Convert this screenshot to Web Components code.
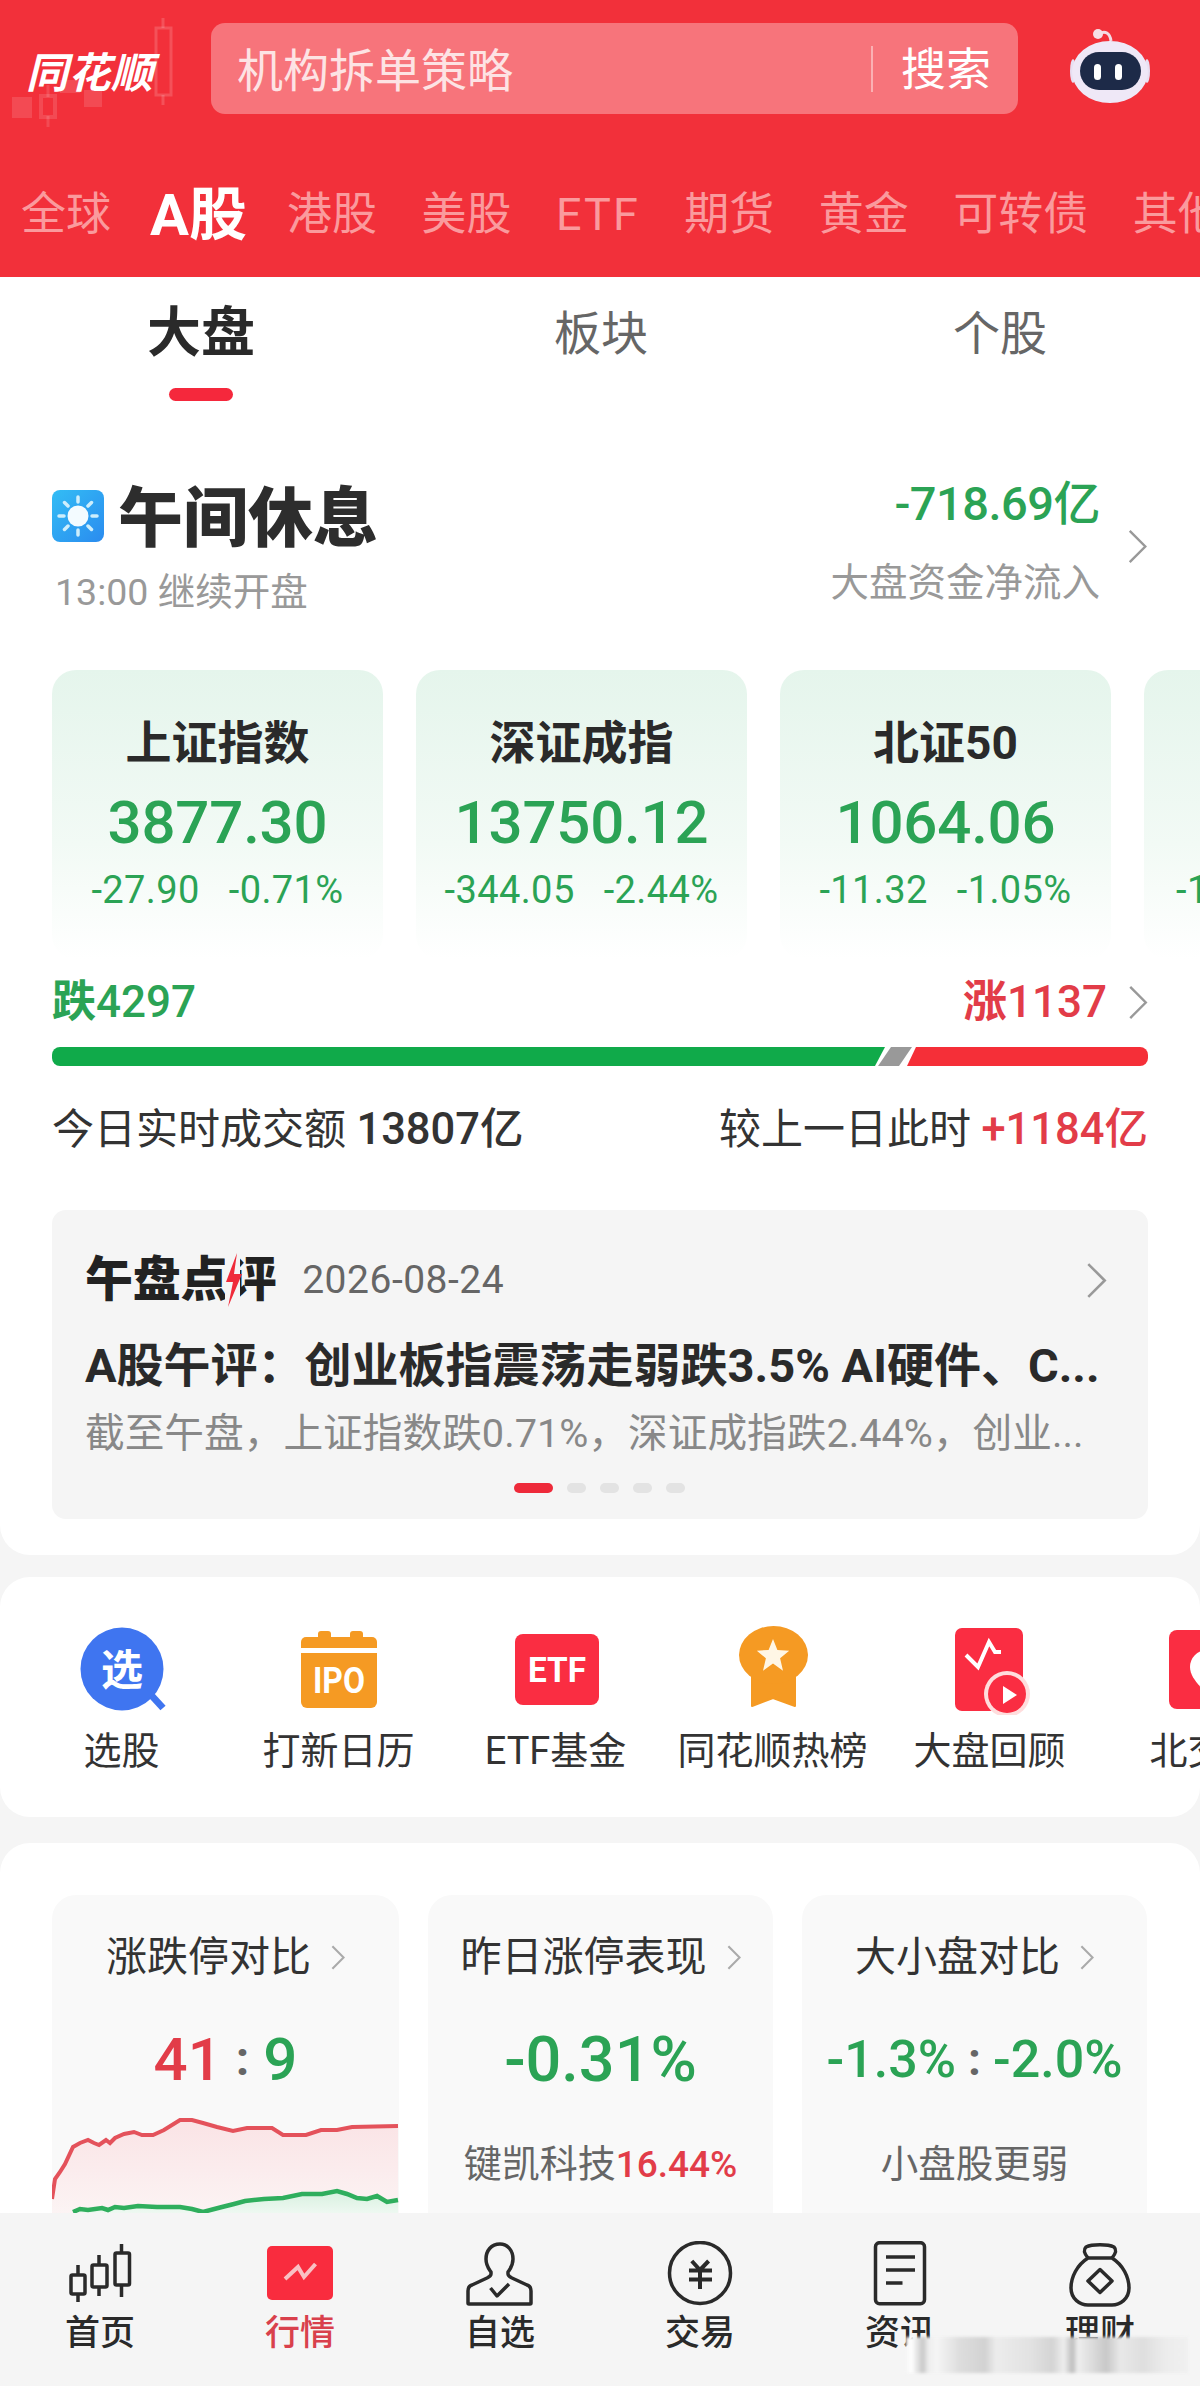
<!DOCTYPE html>
<html lang="zh-CN"><head><meta charset="utf-8"><title>同花顺行情</title>
<style>html,body{margin:0;padding:0;background:#f5f5f5}body{width:1200px;font-family:Roboto,"Noto Sans CJK SC",sans-serif;color:#333}</style></head>
<body>
<app-shell>
  <app-header></app-header>
  <scroll-area>
    <overview-section></overview-section>
    <shortcut-section>
      <shortcut-item label="选股" icon="pick"></shortcut-item>
      <shortcut-item label="打新日历" icon="ipo"></shortcut-item>
      <shortcut-item label="ETF基金" icon="etf"></shortcut-item>
      <shortcut-item label="同花顺热榜" icon="medal"></shortcut-item>
      <shortcut-item label="大盘回顾" icon="review"></shortcut-item>
      <shortcut-item label="北交所" icon="pin"></shortcut-item>
    </shortcut-section>
    <compare-section></compare-section>
  </scroll-area>
  <bottom-nav></bottom-nav>
</app-shell>
<script>
const GREEN='#2ba355',RED='#e23c48';
const CHEV=(w,h,c,sw)=>`<svg width="${w}" height="${h}" viewBox="0 0 20 36" style="display:block;flex:none" fill="none" stroke="${c}" stroke-width="${sw}"><path d="M2 2 L18 18 L2 34"/></svg>`;
function def(name,render){customElements.define(name,class extends HTMLElement{connectedCallback(){if(this.shadowRoot)return;const r=this.attachShadow({mode:'open'});r.innerHTML=render(this)}})}

def('app-shell',()=>`<style>:host{display:flex;flex-direction:column;width:1200px;height:2386px;overflow:hidden;background:#f5f5f5}</style><slot></slot>`);
def('scroll-area',()=>`<style>:host{display:block;height:1936px;overflow:hidden;flex:none}</style><slot></slot>`);

def('app-header',()=>{
const tabs=['全球','A股','港股','美股','ETF','期货','黄金','可转债','其他'];
return `<style>
:host{display:block;height:277px;background:#f2303a;overflow:hidden;flex:none}
.top{display:flex;padding-top:23px;height:91px}
.logo{position:relative;width:211px;flex:none}
.logo svg{position:absolute;left:0;top:-23px}
.logo b{position:absolute;left:26px;top:22px;font:italic 700 42px/50px "Noto Sans CJK SC",sans-serif;color:#fff;letter-spacing:.5px;white-space:nowrap}
.search{width:807px;height:91px;box-sizing:border-box;background:#f7747b;border-radius:14px;display:flex;align-items:center;padding:4px 0 0 26px;flex:none;color:#fde3e4;font-size:46px;line-height:60px}
.search span{flex:1}
.search i{width:2px;height:46px;background:#fbb0b3;margin:-4px 28px 0 0}
.search em{font-style:normal;color:#fff;padding-right:27px;font-size:45px}
.robot{margin-left:52px;margin-top:-2px;flex:none}
.tabs{display:flex;align-items:center;gap:44.5px;padding-left:21px;margin-top:71px;height:60px;white-space:nowrap;font-size:45px;line-height:60px;color:#fa9a9d}
.tabs .on{color:#fff;font-weight:700;font-size:58px;margin:0 -4.5px 0 -5.5px}
.tabs .e{letter-spacing:2px}
</style>
<div class="top"><div class="logo">
<svg width="190" height="130" fill="#ffffff" fill-opacity=".13"><rect x="12" y="97" width="20" height="21"/><path d="M48 85v12M48 116v11" stroke="#fff" stroke-opacity=".13" stroke-width="3"/><rect x="41" y="96" width="14" height="21" fill="none" stroke="#fff" stroke-opacity=".13" stroke-width="4"/><rect x="60" y="80" width="20" height="13"/><rect x="84" y="90" width="18" height="17"/><path d="M163 18v10M163 95v10" stroke="#fff" stroke-opacity=".16" stroke-width="3"/><rect x="156" y="28" width="15" height="67" fill="none" stroke="#fff" stroke-opacity=".16" stroke-width="3"/></svg>
<b>同花顺</b></div>
<div class="search"><span>机构拆单策略</span><i></i><em>搜索</em></div>
<svg class="robot" width="100" height="100" viewBox="0 0 100 100"><path d="M29 13 C35 9 40 12 41 20" fill="none" stroke="#f3dbe4" stroke-width="3"/><circle cx="28" cy="13" r="5" fill="#f6dfe6"/><ellipse cx="3" cy="50" rx="3" ry="12" fill="#e8dff2"/><ellipse cx="77" cy="50" rx="3" ry="12" fill="#e8dff2"/><ellipse cx="40" cy="51" rx="38" ry="31" fill="#efe8f7"/><rect x="10" y="31" width="61" height="38" rx="19" fill="#1d2a48"/><rect x="24" y="43" width="7" height="16" rx="3.5" fill="#fff"/><rect x="45" y="43" width="7" height="16" rx="3.5" fill="#fff"/></svg>
</div>
<div class="tabs">${tabs.map(t=>`<span class="${t==='A股'?'on':t==='ETF'?'e':''}">${t}</span>`).join('')}</div>`});

def('index-card',h=>{const g=k=>h.getAttribute(k)||'';
return `<style>
:host{display:block;width:331px;height:289px;flex:none;box-sizing:border-box;padding-top:48px;border-radius:24px;background:linear-gradient(#e5f5ec,#f2faf5 60%,#fff);text-align:center}
.t{height:50px;font-size:46px;line-height:50px;font-weight:700;color:#2a2a2a}
.v{height:70px;margin-top:20px;font-size:60px;line-height:70px;font-weight:500;color:${GREEN};letter-spacing:-.2px}
.s{height:46px;margin-top:9px;display:flex;justify-content:center;gap:29px;font-size:38px;line-height:46px;color:${GREEN};white-space:nowrap;letter-spacing:.4px}
:host([clipped]) .s{justify-content:flex-start;padding-left:32px}
</style><div class="t">${g('name')}</div><div class="v">${g('value')}</div><div class="s"><span>${g('a')}</span><span>${g('b')}</span></div>`});

def('overview-section',()=>`<style>
:host{display:block;background:#fff;border-radius:0 0 30px 30px;height:1278px;overflow:hidden;box-sizing:border-box}
.sub{display:grid;grid-template-columns:402px 398px 400px;padding-top:27px;height:125px;box-sizing:border-box;text-align:center;font-size:47px;line-height:60px;color:#666}
.sub b{display:block;font-size:54px;color:#2a2a2a;font-weight:700}
.sub u{display:block;width:64px;height:13px;border-radius:7px;background:#f5283c;margin:24px auto 0}
.sum{display:flex;padding:83px 52px 0;height:268px;box-sizing:border-box;justify-content:space-between;align-items:flex-start}
.ttl{display:flex;align-items:center;gap:14px;height:64px;margin-top:2px;font-size:65px;line-height:64px;font-weight:900;color:#2d2d2d}
.ttl svg{display:block;margin-top:-7px}
.when{margin:16px 0 0 3px;font-size:37.5px;line-height:50px;color:#999;white-space:nowrap}
.flow{display:flex;gap:27px;align-items:center;margin-top:-6px}
.flow div{text-align:right}
.flow b{display:block;font-weight:500;font-size:47px;line-height:50px;color:${GREEN};letter-spacing:-.5px}
.flow span{display:block;margin-top:29px;font-size:38.5px;line-height:50px;color:#999}
.flow svg{margin-top:6px}
.cards{display:flex;gap:33px;margin-left:52px;width:1400px}
.rows{padding:0 52px}
.rf{display:flex;justify-content:space-between;align-items:center;margin-top:18px;height:50px;font-size:44px;line-height:50px;font-weight:500}
.rf .r{display:flex;align-items:center;gap:21px;color:${RED}}
.rf .l{color:${GREEN}}
.bar{display:block;margin-top:20px;height:19px;border-radius:8px;overflow:hidden}
.bar svg{display:block}
.turn{display:flex;justify-content:space-between;margin-top:39px;height:50px;font-size:42px;line-height:50px;color:#333;white-space:nowrap}
.turn b{font-weight:500;font-size:43.5px}.turn .p{color:${RED}}
.news{position:relative;margin-top:55px;height:309px;box-sizing:border-box;padding:45px 41px 0 33px;background:#f5f5f5;border-radius:14px}
.hd{display:flex;align-items:center;height:50px;position:relative}
.hd strong{position:relative;font-size:48px;line-height:50px;font-weight:900;color:#222;letter-spacing:-.2px;white-space:nowrap}
.hd strong svg{position:absolute;left:140px;top:-2px}
.hd time{margin-left:26px;font-size:39px;color:#666;line-height:50px;flex:1;letter-spacing:.5px}
.h{margin-top:31px;height:60px;font-size:47px;line-height:60px;font-weight:700;color:#2a2a2a;white-space:nowrap}
.d{margin-top:13px;height:50px;font-size:39.7px;line-height:50px;color:#888;white-space:nowrap}
.dots{display:flex;gap:14px;margin:24px 0 0 429px}
.dots i{width:19px;height:10px;border-radius:5px;background:#e3e3e3}
.dots i:first-child{width:39px;background:#ee2a3a}
</style>
<div class="sub"><div><b>大盘</b><u></u></div><div>板块</div><div>个股</div></div>
<div class="sum"><div>
<div class="ttl"><svg width="52" height="52" viewBox="0 0 52 52"><defs><linearGradient id="s" x2="1" y2="1"><stop stop-color="#33bdf5"/><stop offset="1" stop-color="#2a8bef"/></linearGradient></defs><rect width="52" height="52" rx="8" fill="url(#s)"/><circle cx="26" cy="26" r="10.5" fill="#f3fbff"/><g stroke="#cdeefc" stroke-width="3.5" stroke-linecap="round"><path d="M26 7v5M26 40v5M7 26h5M40 26h5M12.5 12.5l3.5 3.5M36 36l3.5 3.5M12.5 39.5l3.5-3.5M36 16l3.5-3.5"/></g></svg><span>午间休息</span></div>
<div class="when">13:00 继续开盘</div></div>
<div class="flow"><div><b>-718.69亿</b><span>大盘资金净流入</span></div>${CHEV(21,35,'#999',2.5)}</div></div>
<div class="cards">
<index-card name="上证指数" value="3877.30" a="-27.90" b="-0.71%"></index-card>
<index-card name="深证成指" value="13750.12" a="-344.05" b="-2.44%"></index-card>
<index-card name="北证50" value="1064.06" a="-11.32" b="-1.05%"></index-card>
<index-card a="-1" clipped></index-card></div>
<div class="rows">
<div class="rf"><span class="l"><b>跌</b>4297</span><span class="r"><span><b>涨</b>1137</span>${CHEV(20,35,'#999',2.5)}</span></div>
<div class="bar"><svg width="1096" height="19"><polygon points="0,0 833,0 823,19 0,19" fill="#10aa4a"/><polygon points="839,0 860,0 847,19 826,19" fill="#999"/><polygon points="864,0 1096,0 1096,19 855,19" fill="#f52f38"/></svg></div>
<div class="turn"><span>今日实时成交额 <b>13807亿</b></span><span>较上一日此时 <b class="p">+1184亿</b></span></div>
<div class="news"><div class="hd"><strong>午盘点评<svg width="20" height="54" viewBox="0 0 20 54"><rect width="15" height="54" fill="#f5f5f5"/><polygon points="12,0 1,29 8,29 3,54 17,21 9,21" fill="#ef2b3a"/></svg></strong><time>2026-08-24</time>${CHEV(21,37,'#999',2.5)}</div>
<div class="h">A股午评：创业板指震荡走弱跌3.5% AI硬件、C...</div>
<div class="d">截至午盘，上证指数跌0.71%，深证成指跌2.44%，创业...</div>
<div class="dots"><i></i><i></i><i></i><i></i><i></i></div></div></div>`);

def('shortcut-section',()=>`<style>:host{display:flex;margin-top:22px;height:240px;box-sizing:border-box;padding:46px 0 0 13px;background:#fff;border-radius:30px;overflow:hidden;width:1200px}</style><slot></slot>`);
const IC={
pick:`<circle cx="50" cy="44" r="41.5" fill="#3f75f0"/><path d="M80 71 L91 83" stroke="#3f75f0" stroke-width="7"/><text x="50" y="60" text-anchor="middle" font-size="42" font-weight="700" fill="#fff" font-family="Noto Sans CJK SC">选</text>`,
ipo:`<g fill="#f59a23"><rect x="29" y="6" width="13" height="10" rx="3"/><rect x="61" y="6" width="13" height="10" rx="3"/><path d="M12 23v-6a5 5 0 0 1 5-5h66a5 5 0 0 1 5 5v6z"/><path d="M12 28h76v49a6 6 0 0 1-6 6H18a6 6 0 0 1-6-6z"/></g><text x="50" y="68" text-anchor="middle" font-size="36" font-weight="700" fill="#fff" textLength="52" lengthAdjust="spacingAndGlyphs" font-family="Roboto">IPO</text>`,
etf:`<rect x="9" y="9" width="84" height="71" rx="8" fill="#fa2d42"/><text x="51" y="57" text-anchor="middle" font-size="35" font-weight="700" fill="#fff" textLength="58" lengthAdjust="spacingAndGlyphs" font-family="Roboto">ETF</text>`,
medal:`<polygon points="29,44 29,81 50,73 72,81 72,44" fill="#f59a23" stroke="#f59a23" stroke-width="2" stroke-linejoin="round"/><ellipse cx="50.5" cy="30" rx="34.5" ry="29" fill="#f59a23"/><polygon points="50,14 54.4,24.9 66.2,25.7 57.1,33.3 60,45.8 50,38.5 40,45.8 42.9,33.3 33.8,25.7 45.6,24.9" fill="#fff6e5"/>`,
review:`<rect x="15" y="3" width="68" height="83" rx="7" fill="#fa2d42"/><path d="M26 30 L38 42 L49 17 L55 27 L61 27" fill="none" stroke="#fff" stroke-width="4"/><circle cx="67" cy="69" r="23" fill="#fdd" /><circle cx="67" cy="69" r="19" fill="#fa2d42"/><polygon points="63,61 77,70 63,79" fill="#fff"/>`,
pin:`<rect x="12" y="5" width="80" height="79" rx="8" fill="#fa2d42"/><path d="M50 25 a17 17 0 0 1 17 17 c0 10 -10 20 -17 26 c-7 -6 -17 -16 -17 -26 a17 17 0 0 1 17 -17z" fill="#fff"/>`};
def('shortcut-item',h=>`<style>:host{display:block;width:217px;flex:none;text-align:center}svg{display:block;margin:2px auto 0}
div{margin-top:11px;font-size:38px;line-height:50px;color:#333;white-space:nowrap}</style>
<svg width="100" height="90" viewBox="0 0 100 90">${IC[h.getAttribute('icon')]}</svg><div>${h.getAttribute('label')}</div>`);

def('compare-section',()=>`<style>
:host{display:block;margin-top:26px;background:#fff;border-radius:30px;padding:52px 52px 0;height:500px;box-sizing:border-box}
.g{display:grid;grid-template-columns:347px 345px 345px;gap:29px}
.c{position:relative;height:450px;background:#f9f9f9;border-radius:24px 24px 0 0;padding-top:37px;box-sizing:border-box;text-align:center;overflow:hidden}
.t{display:flex;justify-content:center;align-items:center;gap:20px;height:50px;font-size:41px;line-height:50px;color:#333;white-space:nowrap}
.v{height:80px;margin-top:38px;font-size:63px;line-height:80px;font-weight:500;white-space:nowrap;color:${GREEN}}
.v.a{font-size:60px}
.v i{font-style:normal;font-weight:700;color:#666;font-size:48px;margin:0 14px;position:relative;top:-5px}
.v.s{font-size:52px}.v.s i{margin:0 12px;top:-2px;font-size:46px}
.n{height:50px;margin-top:39px;font-size:38px;line-height:50px;color:#666;white-space:nowrap}
.n b{color:${RED};font-weight:500;font-size:37px}
svg.ch{display:block;margin-top:10px}
</style>
<div class="g">
<div class="c"><div class="t"><span>涨跌停对比</span>${CHEV(14,27,'#aaa',3)}</div><div class="v a"><span style="color:${RED}">41</span><i>:</i><span>9</span></div>
<svg class="ch" width="347" height="110" viewBox="0 0 347 110"><defs><linearGradient id="pk" x1="0" y1="0" x2="0" y2="1"><stop stop-color="#fae3e5"/><stop offset="1" stop-color="#fcf5f5"/></linearGradient><linearGradient id="gn" x1="0" y1="0" x2="0" y2="1"><stop stop-color="#d7f0df"/><stop offset="1" stop-color="#f5fbf7"/></linearGradient></defs>
<path d="M0 89 L3 69 L8 62 L13 54 L21 37 L28 33 L36 30 L42 33 L47 35 L54 30 L58 33 L63 28 L72 24 L82 22 L90 25 L101 25 L112 20 L128 10 L140 10 L151 13 L165 17 L181 21 L195 18 L220 18 L231 25 L254 25 L269 20 L285 20 L300 17 L346 16 V110 H0Z" fill="url(#pk)"/>
<path d="M21 102 L28 99 L36 100 L50 98 L56 100 L63 97 L72 98 L86 96 L105 97 L128 97 L140 99 L151 102 L170 97 L182 94 L193 91 L212 89 L231 88 L250 84 L270 84 L285 81 L295 84 L305 88 L315 89 L325 86 L335 92 L346 90 V110 H21Z" fill="url(#gn)"/>
<polyline fill="none" stroke="#e4525b" stroke-width="4" points="0,89 3,69 8,62 13,54 21,37 28,33 36,30 42,33 47,35 54,30 58,33 63,28 72,24 82,22 90,25 101,25 112,20 128,10 140,10 151,13 165,17 181,21 195,18 220,18 231,25 254,25 269,20 285,20 300,17 346,16"/>
<polyline fill="none" stroke="#2fae5d" stroke-width="4.5" points="21,102 28,99 36,100 50,98 56,100 63,97 72,98 86,96 105,97 128,97 140,99 151,102 170,97 182,94 193,91 212,89 231,88 250,84 270,84 285,81 295,84 305,88 315,89 325,86 335,92 346,90"/></svg></div>
<div class="c"><div class="t"><span>昨日涨停表现</span>${CHEV(14,27,'#aaa',3)}</div><div class="v">-0.31%</div><div class="n">键凯科技<b>16.44%</b></div></div>
<div class="c"><div class="t"><span>大小盘对比</span>${CHEV(14,27,'#aaa',3)}</div><div class="v s">-1.3%<i>:</i>-2.0%</div><div class="n" style="font-size:37.5px">小盘股更弱</div></div>
</div>`);

const NAV=[
['首页',`<g fill="none" stroke="#2a2a2a" stroke-width="3.5"><path d="M28 24v10M28 53v8M49 14v10M49 46v9M71.5 3v9M71.5 44v12"/><rect x="21" y="34" width="14" height="19" rx="1.5"/><rect x="42" y="24" width="15" height="22" rx="1.5"/><rect x="65" y="12" width="14.5" height="32" rx="1.5"/></g>`],
['行情',`<rect x="17" y="5" width="66" height="54" rx="5" fill="#f92c3e"/><path d="M35 38 L48 26 L54 36 L65.5 23" fill="none" stroke="#f9c0c4" stroke-width="4"/>`],
['自选',`<g transform="translate(15 0)" fill="none" stroke="#2a2a2a" stroke-width="3.5" stroke-linejoin="round"><path d="M35 3 C26 3 21 10 21 18 C21 25 24 28 26 31 L26 33 C26 35 24 36 22 37 L7 44 C4 45 3 47 3 50 L3 62 Q3 63 4 63 L65 63 Q66 63 66 62 L66 50 C66 47 65 45 62 44 L47 37 C45 36 43 35 43 33 L43 31 C45 28 48 25 48 18 C48 10 43 3 35 3Z"/><path d="M25.5 47 L32 55 L44 43"/></g>`],
['交易',`<g fill="none" stroke="#2a2a2a" stroke-width="3.5"><circle cx="50" cy="32" r="30.5"/><path d="M41.8 20 L50 29 L58.6 20M39 29.5h23M39 38.5h23M50 29v19" stroke-width="4"/></g>`],
['资讯',`<g fill="none" stroke="#2a2a2a" stroke-width="3.5"><rect x="25.5" y="1.7" width="49" height="61" rx="4"/><path d="M36 16h29M36 29h29M36 42h16.5"/></g>`],
['理财',`<g fill="none" stroke="#2a2a2a" stroke-width="3.5" stroke-linejoin="round"><path d="M38 17 C27 24 21 36 21 47 C21 58 30 64 38 64 L62 64 C70 64 79 58 79 47 C79 36 73 24 62 17 Z"/><path d="M38 17 C34 12 33 9 36 6 C42 3 58 3 64 6 C67 9 66 12 62 17"/><polygon points="50,28.5 62,40 50,51.5 38,40"/></g>`]];
def('bottom-nav',()=>`<style>
:host{display:grid;grid-template-columns:repeat(6,200px);position:relative;height:173px;background:#f5f5f5;box-sizing:border-box;padding-top:28px;flex:none}
svg{display:block;margin:0 auto}
div.i{text-align:center}
span{display:block;margin-top:7px;font-size:35px;line-height:40px;font-weight:500;color:#2a2a2a}
.on span{color:#d9404c}
.smear{position:absolute;left:906px;top:124px;width:282px;height:36px;filter:blur(1.5px);background:
linear-gradient(90deg,#f5f5f5 0,#fff 2%,#c8c8c8 6%,#eee 8%,#f5f5f5 11%,#ddd 19%,#d2d2d2 28%,#ececec 32%,#e2e2e2 44%,#d4d4d4 52%,#eee 56%,#bdbdbd 59%,#eee 61%,#dcdcdc 66%,#c8c8c8 71%,#e8e8e8 76%,#dedede 84%,#ececec 92%,#f0f0f0 100%)}
</style>${NAV.map((n,i)=>`<div class="i ${i==1?'on':''}"><svg width="100" height="66" viewBox="0 0 100 66">${n[1]}</svg><span>${n[0]}</span></div>`).join('')}<div class="smear"></div>`);
</script>
</body></html>
